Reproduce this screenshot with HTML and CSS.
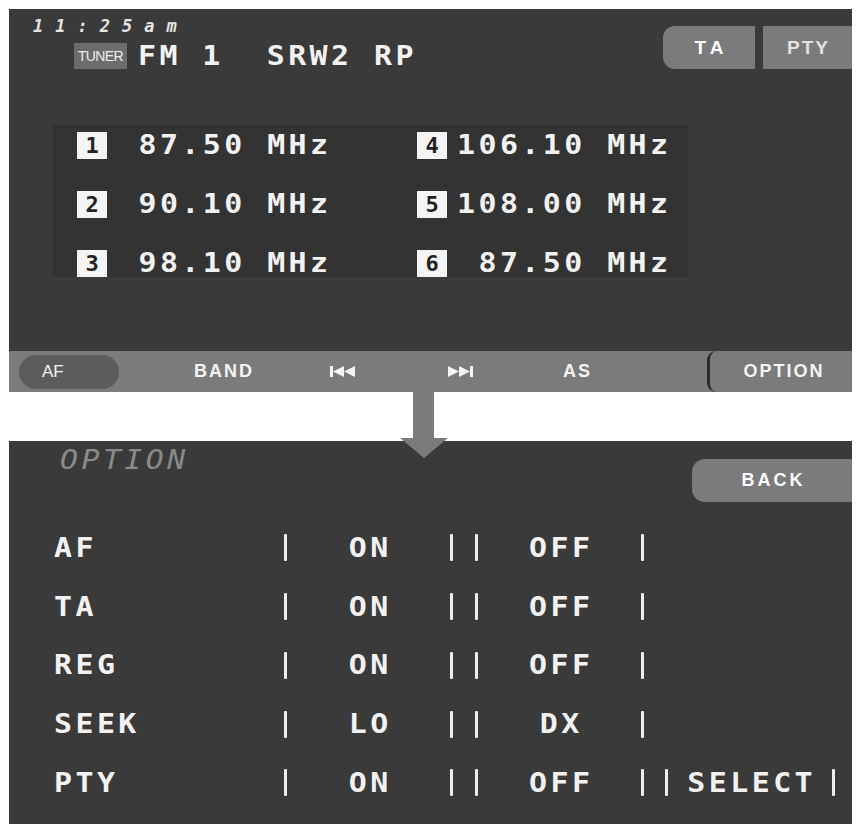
FILE: index.html
```html
<!DOCTYPE html>
<html lang="en">
<head>
<meta charset="utf-8">
<title>Tuner option screen</title>
<link rel="stylesheet" href="styles.css">
</head>
<body>
<div class="page">
  <section class="screen top">
    <div class="head">
      <div class="head-left">
        <div class="clock">11:25am</div>
        <div class="source">
          <span class="tuner">TUNER</span>
          <span class="station">FM 1  SRW2 RP</span>
        </div>
      </div>
      <div class="tabs">
        <div class="tab tab-ta">TA</div>
        <div class="tab tab-pty">PTY</div>
      </div>
    </div>
    <div class="presets">
      <div class="preset"><span class="num">1</span><span class="freq"> 87.50 MHz</span></div>
      <div class="preset"><span class="num">4</span><span class="freq">106.10 MHz</span></div>
      <div class="preset"><span class="num">2</span><span class="freq"> 90.10 MHz</span></div>
      <div class="preset"><span class="num">5</span><span class="freq">108.00 MHz</span></div>
      <div class="preset"><span class="num">3</span><span class="freq"> 98.10 MHz</span></div>
      <div class="preset"><span class="num">6</span><span class="freq"> 87.50 MHz</span></div>
    </div>
  </section>
  <nav class="softkeys">
    <div class="sk sk-af">AF</div>
    <div class="sk sk-band">BAND</div>
    <div class="sk sk-prev">
      <svg width="26" height="11" viewBox="0 0 26 11"><rect x="0" y="0" width="3" height="11" fill="#f4f4f4"/><polygon points="3,5.5 14,0 14,11" fill="#f4f4f4"/><polygon points="14,5.5 25,0 25,11" fill="#f4f4f4"/></svg>
    </div>
    <div class="sk sk-next">
      <svg width="26" height="11" viewBox="0 0 26 11"><polygon points="1,0 12,5.5 1,11" fill="#f4f4f4"/><polygon points="12,0 23,5.5 12,11" fill="#f4f4f4"/><rect x="23" y="0" width="3" height="11" fill="#f4f4f4"/></svg>
    </div>
    <div class="sk sk-as">AS</div>
    <div class="sk-fill"></div>
    <div class="sk sk-option">OPTION</div>
  </nav>
  <section class="screen bottom">
    <div class="opt-head">
      <div class="opt-title">OPTION</div>
      <div class="back">BACK</div>
    </div>
    <div class="opt-list">
      <div class="opt-row"><span class="lbl">AF</span><span class="bar"></span><span class="val v1">ON</span><span class="bar"></span><span class="sp"></span><span class="bar"></span><span class="val v2">OFF</span><span class="bar"></span></div>
      <div class="opt-row"><span class="lbl">TA</span><span class="bar"></span><span class="val v1">ON</span><span class="bar"></span><span class="sp"></span><span class="bar"></span><span class="val v2">OFF</span><span class="bar"></span></div>
      <div class="opt-row"><span class="lbl">REG</span><span class="bar"></span><span class="val v1">ON</span><span class="bar"></span><span class="sp"></span><span class="bar"></span><span class="val v2">OFF</span><span class="bar"></span></div>
      <div class="opt-row"><span class="lbl">SEEK</span><span class="bar"></span><span class="val v1">LO</span><span class="bar"></span><span class="sp"></span><span class="bar"></span><span class="val v2">DX</span><span class="bar"></span></div>
      <div class="opt-row"><span class="lbl">PTY</span><span class="bar"></span><span class="val v1">ON</span><span class="bar"></span><span class="sp"></span><span class="bar"></span><span class="val v2">OFF</span><span class="bar"></span><span class="sp sp2"></span><span class="bar"></span><span class="val v3">SELECT</span><span class="bar"></span></div>
    </div>
  </section>
  <svg class="flow-arrow" width="48" height="67" viewBox="0 0 48 67"><rect x="13" y="0" width="21" height="47" fill="#7b7b7b"/><polygon points="0,46 48,46 24,66" fill="#7b7b7b"/></svg>
</div>
</body>
</html>
```

FILE: styles.css
```css
* { box-sizing: border-box; margin: 0; padding: 0; }

body {
  background: #ffffff;
  font-family: "DejaVu Sans Mono", monospace;
}

.page {
  position: relative;
  width: 859px;
  height: 826px;
  padding: 9px 0 0 9px;
}

.screen {
  width: 843px;
  background: #3a3a3a;
  color: #f2f2f2;
}

/* ---------- top screen ---------- */
.top {
  height: 342px;
  display: flex;
  flex-direction: column;
}

.head {
  display: flex;
  justify-content: space-between;
  align-items: flex-start;
}

.head-left {
  padding: 5px 0 0 24px;
}

.clock {
  font: italic bold 17px/24px "DejaVu Sans Mono", monospace;
  letter-spacing: 12px;
  color: #e4e4e4;
}

.source {
  display: flex;
  align-items: center;
  height: 26px;
  margin: 5px 0 0 41px;
}

.tuner {
  width: 53px;
  height: 26px;
  background: #6c6c6c;
  color: #ececec;
  font: 14px/26px "Liberation Sans", sans-serif;
  letter-spacing: -0.6px;
  text-align: center;
}

.station {
  margin-left: 11px;
  font: bold 26px/26px "DejaVu Sans Mono", monospace;
  letter-spacing: 3px;
  white-space: pre;
  transform: scaleX(1.15);
  transform-origin: left center;
}

.tabs {
  display: flex;
  gap: 8px;
  margin-top: 17px;
}

.tab {
  height: 43px;
  background: #7b7b7b;
  display: flex;
  align-items: center;
  justify-content: center;
  font: bold 19px "Liberation Sans", sans-serif;
}

.tab-ta {
  width: 92px;
  border-radius: 12px 0 0 12px;
  color: #ffffff;
  letter-spacing: 5px;
  padding-left: 5px;
}

.tab-pty {
  width: 89px;
  color: #e2e2e2;
  letter-spacing: 2px;
  padding-left: 2px;
}

.presets {
  margin: 56px 0 0 44px;
  width: 635px;
  height: 152px;
  background: #333333;
  padding: 5px 0 0 24px;
  display: grid;
  grid-template-columns: 340px 1fr;
  grid-auto-rows: 30px;
  row-gap: 29px;
}

.preset {
  display: flex;
  align-items: center;
  gap: 10px;
}

.num {
  width: 30px;
  height: 27px;
  background: #f4f4f4;
  color: #222222;
  font: bold 22px/27px "DejaVu Sans Mono", monospace;
  text-align: center;
}

.freq {
  font: bold 26px/30px "DejaVu Sans Mono", monospace;
  letter-spacing: 3px;
  white-space: pre;
  transform: scaleX(1.15);
  transform-origin: left center;
}

/* ---------- soft keys ---------- */
.softkeys {
  width: 843px;
  height: 41px;
  background: #7b7b7b;
  display: flex;
  align-items: center;
  color: #f4f4f4;
  font: bold 18px "Liberation Sans", sans-serif;
  letter-spacing: 2px;
}

.sk {
  text-align: center;
  padding-left: 2px;
}

.sk svg { display: block; margin: 0 auto; }

.sk-af {
  margin-left: 10px;
  width: 100px;
  height: 34px;
  border-radius: 17px;
  background: #5c5c5c;
  text-align: left;
  padding-left: 23px;
  line-height: 34px;
  font-weight: normal;
  font-size: 17px;
  letter-spacing: 0;
}

.sk-band { width: 208px; }
.sk-prev { width: 32px; padding-left: 0; }
.sk-next { width: 202px; padding-left: 0; }
.sk-as { width: 28px; }
.sk-fill { flex: 1; }

.sk-option {
  width: 145px;
  height: 41px;
  line-height: 41px;
  border-left: 3px solid #2c2c2c;
  border-radius: 9px 0 0 9px;
  padding-left: 6px;
}

/* ---------- bottom screen ---------- */
.bottom {
  height: 383px;
  margin-top: 49px;
}

.opt-head {
  display: flex;
  justify-content: space-between;
  align-items: flex-start;
}

.opt-title {
  margin: 6px 0 0 51px;
  font: italic 26px/26px "DejaVu Sans Mono", monospace;
  letter-spacing: 3px;
  color: #8a8a8a;
  transform: scaleX(1.15);
  transform-origin: left center;
}

.back {
  margin-top: 18px;
  width: 160px;
  height: 43px;
  border-radius: 13px 0 0 13px;
  background: #7b7b7b;
  color: #ffffff;
  font: bold 18px/43px "Liberation Sans", sans-serif;
  letter-spacing: 3px;
  padding-left: 3px;
  text-align: center;
}

.opt-list {
  margin-top: 16.6px;
  padding-left: 45px;
}

.opt-row {
  display: flex;
  align-items: center;
  height: 58.75px;
  font: bold 26px/30px "DejaVu Sans Mono", monospace;
  letter-spacing: 3px;
}

.lbl {
  width: 230px;
  transform: scaleX(1.15);
  transform-origin: left center;
}

.bar {
  width: 3px;
  height: 27px;
  background: #eeeeee;
  border-radius: 1px;
}

.val {
  text-align: center;
  padding-left: 3px;
  transform: scaleX(1.15);
  transform-origin: center center;
}

.v1 { width: 163px; }
.v2 { width: 163px; }
.v3 { width: 164px; }

.sp { width: 22px; }
.sp2 { width: 21px; }

.flow-arrow {
  position: absolute;
  left: 400px;
  top: 392px;
}
```
